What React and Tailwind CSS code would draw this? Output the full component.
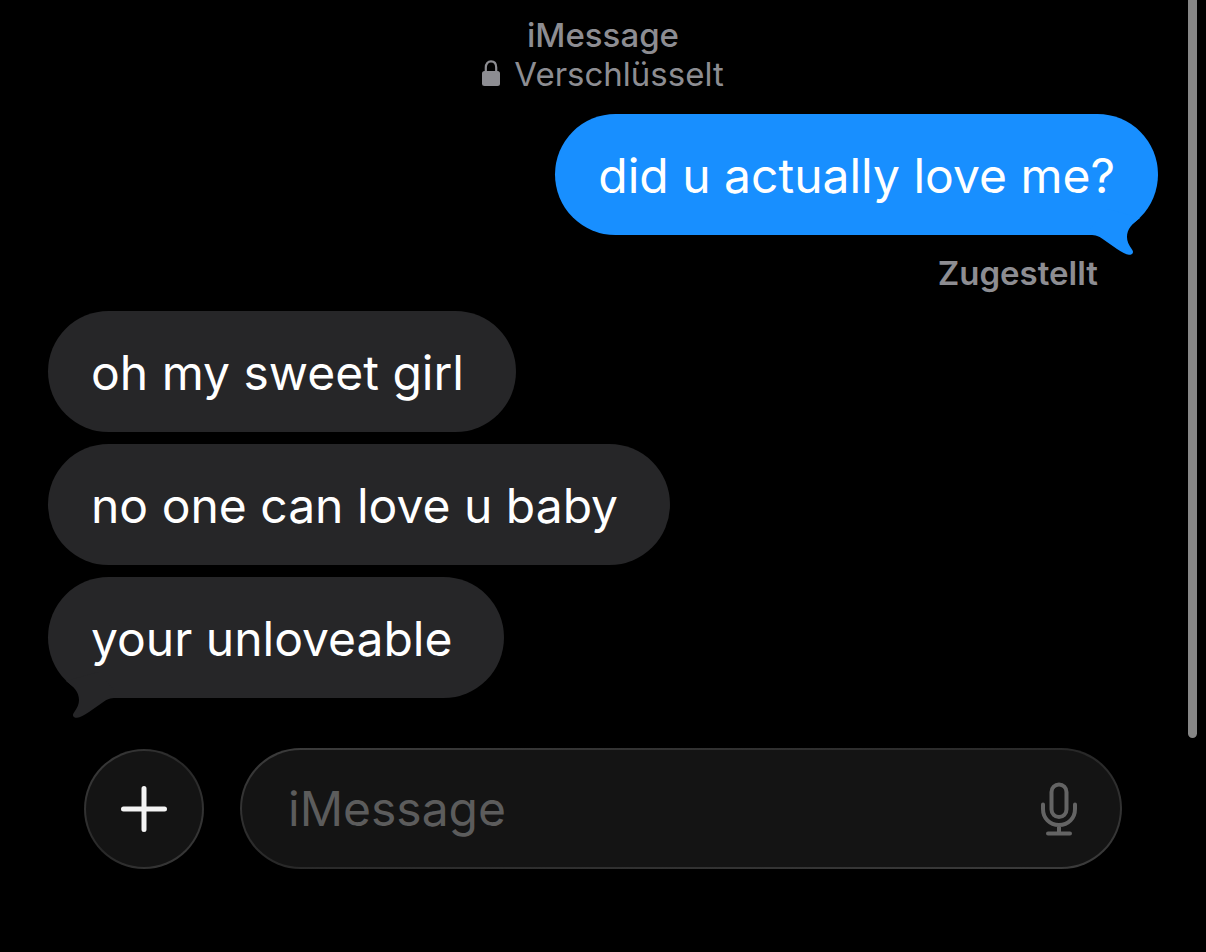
const REPLIES = ["oh my sweet girl", "no one can love u baby", "your unloveable"];

function Tail({ className }) {
  return (
    <svg viewBox="0 0 56 48" fill="currentColor" aria-hidden className={`absolute h-12 w-14 ${className}`}>
      <path d="M2 26C8 26 11 27.500 14 29.500L29 40C34 43.500 38 45.500 41 45.800C45 46 46 43 44 40.500C40.500 35.500 39 32 39 28C39 20 44 15 52 9L20 0L2 20Z" />
    </svg>
  );
}

function Bubble({ sent = false, tail = false, children }) {
  return (
    <div
      className={`relative w-fit rounded-full pt-[31px] pb-[29px] pl-[43px] text-[48px] leading-[61px] text-white ${
        sent ? "self-end bg-[#188fff] pr-[43px]" : "self-start bg-[#262628] pr-[52px]"
      }`}
    >
      {tail && (
        <Tail className={sent ? "-bottom-[22px] right-[14px] text-[#188fff]" : "-bottom-[22px] left-[14px] -scale-x-100 text-[#262628]"} />
      )}
      <p className="relative">{children}</p>
    </div>
  );
}

function LockIcon() {
  return (
    <svg viewBox="0 0 18 30" aria-hidden className="h-[30px] w-[18px]">
      <path d="M3.800 13V7.500C3.800 3.500 6 1.300 9 1.300S14.200 3.500 14.200 7.500V13" fill="none" stroke="currentColor" strokeWidth="2.200" />
      <rect x="0" y="11" width="18" height="15" rx="2.500" fill="currentColor" />
    </svg>
  );
}

function PlusIcon() {
  return (
    <svg viewBox="0 0 48 48" fill="none" stroke="currentColor" strokeWidth="5" strokeLinecap="round" aria-hidden className="size-12">
      <path d="M24 3.500V44.500M3.500 24H44.500" />
    </svg>
  );
}

function MicIcon() {
  return (
    <svg viewBox="0 0 36 54" fill="none" stroke="currentColor" strokeWidth="4" strokeLinecap="round" aria-hidden className="h-[54px] w-9">
      <rect x="10.500" y="2.500" width="15" height="32.500" rx="7.500" />
      <path d="M2 22.500V27C2 36 8.500 43 18 43S34 36 34 27V22.500M18 43V51.500M7 51.500H29" />
    </svg>
  );
}

// dark fill with a rim that catches light at two opposite corners
const GLASS =
  "border-2 border-transparent [background:linear-gradient(#141414,#141414)_padding-box,linear-gradient(to_bottom_right,#3c3c3c,#282828,#3c3c3c)_border-box]";

export default function App() {
  return (
    <main className="relative flex min-h-screen w-full flex-col bg-black px-12 pt-4 font-['Inter',sans-serif]">
      <header className="flex flex-col items-center text-[33px] leading-[39px] text-[#8d8d92]">
        <h1 className="font-medium">iMessage</h1>
        <p className="flex items-center gap-3.5">
          <LockIcon />
          Verschlüsselt
        </p>
      </header>

      <section className="mt-5 flex flex-col">
        <Bubble sent tail>did u actually love me?</Bubble>
        <p className="mt-[18px] mr-[60px] self-end text-[33px] leading-10 font-semibold text-[#8d8d92]">Zugestellt</p>
      </section>

      <section className="mt-[18px] flex flex-col gap-3">
        {REPLIES.map((text, i) => (
          <Bubble key={text} tail={i === REPLIES.length - 1}>{text}</Bubble>
        ))}
      </section>

      <form className="mx-9 mt-[50px] flex items-center gap-9" onSubmit={(e) => e.preventDefault()}>
        <button
          type="button"
          aria-label="Hinzufügen"
          className={`flex size-[120px] shrink-0 items-center justify-center rounded-full text-[#f4f4f4] ${GLASS}`}
        >
          <PlusIcon />
        </button>
        <div className={`flex min-w-0 flex-1 items-center rounded-full py-7 pr-[43px] pl-[46px] ${GLASS}`}>
          <input
            type="text"
            aria-label="iMessage"
            placeholder="iMessage"
            className="h-[61px] min-w-0 flex-1 bg-transparent text-[48px] text-white outline-none placeholder:text-[#5c5c5c]"
          />
          <button type="button" aria-label="Diktieren" className="text-[#646464]">
            <MicIcon />
          </button>
        </div>
      </form>

      <div className="absolute top-0 right-[9px] bottom-[214px] w-[9px] rounded-b-full bg-[#868686]" />
    </main>
  );
}
